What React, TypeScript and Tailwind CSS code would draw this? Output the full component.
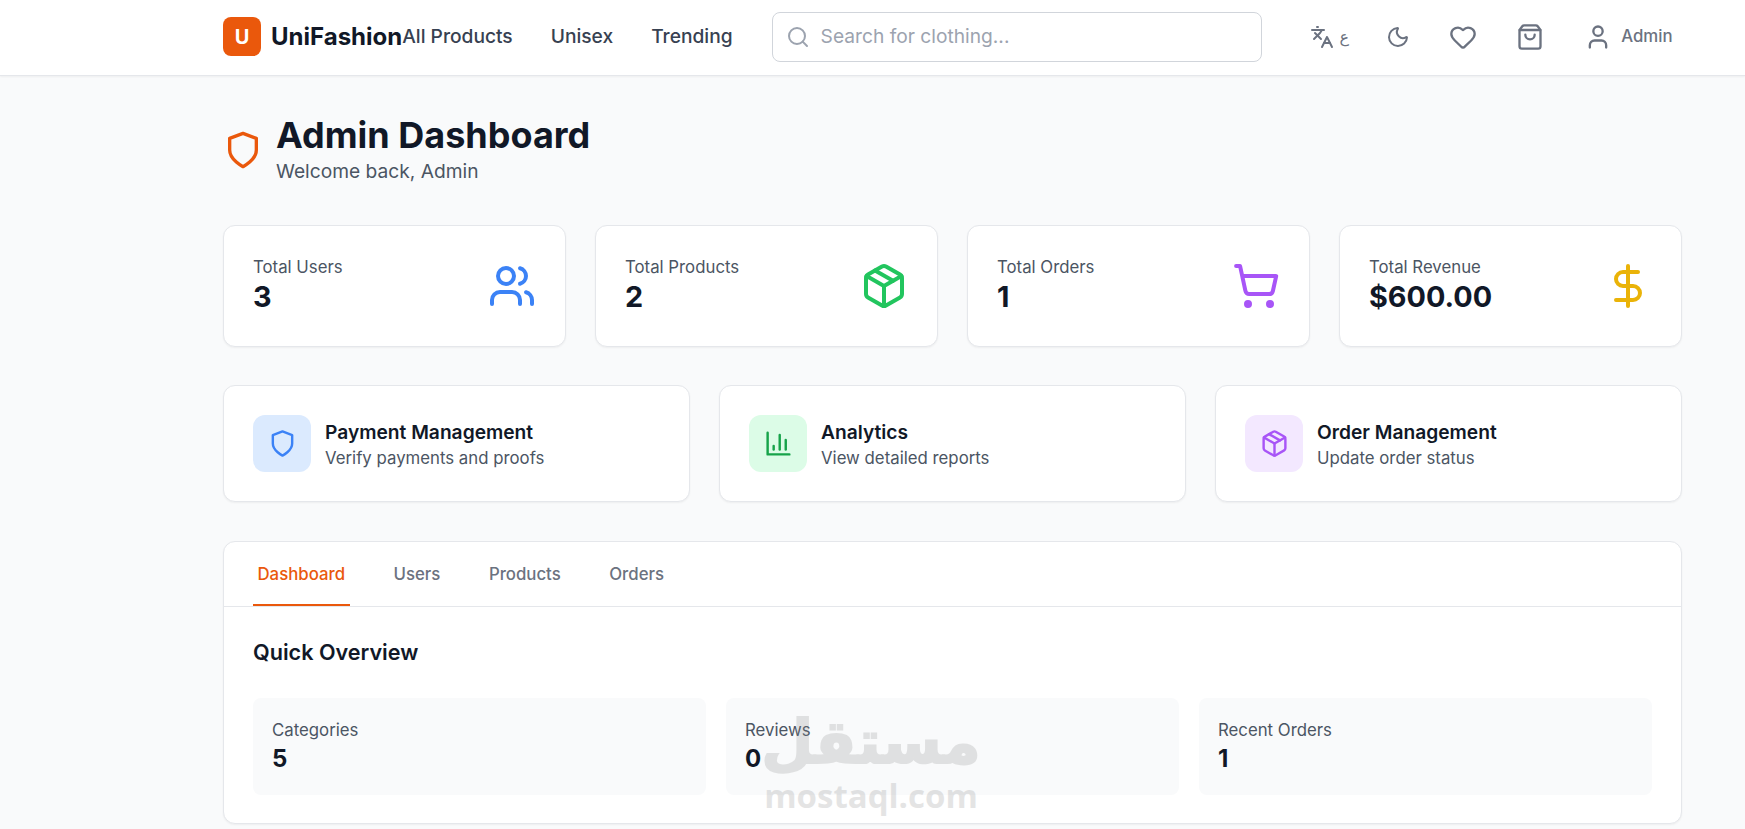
import { Heart, Moon, Package, Search, ShoppingBag, ShoppingCart, User, Users, DollarSign, Languages } from "lucide-react";

function ShieldIcon({ className }: { className?: string }) {
  return (
    <svg viewBox="0 0 24 24" fill="none" stroke="currentColor" strokeWidth="2" strokeLinecap="round" strokeLinejoin="round" className={className}>
      <path d="M12 22s8-4 8-10V5l-8-3-8 3v7c0 6 8 10 8 10z" />
    </svg>
  );
}

function BarsIcon({ className }: { className?: string }) {
  return (
    <svg viewBox="0 0 24 24" fill="none" stroke="currentColor" strokeWidth="2" strokeLinecap="round" strokeLinejoin="round" className={className}>
      <path d="M3 3v18h18" />
      <path d="M18 17V9" />
      <path d="M13 17V5" />
      <path d="M8 17v-3" />
    </svg>
  );
}

const stats = [
  { label: "Total Users", value: "3", icon: <Users className="h-12 w-12 text-[#3b82f6]" /> },
  { label: "Total Products", value: "2", icon: <Package className="h-12 w-12 text-[#22c55e]" /> },
  { label: "Total Orders", value: "1", icon: <ShoppingCart className="h-12 w-12 text-[#a855f7]" /> },
  { label: "Total Revenue", value: "$600.00", icon: <DollarSign className="h-12 w-12 text-[#eab308]" /> },
];

const actions = [
  { title: "Payment Management", text: "Verify payments and proofs", box: "bg-[#dbeafe]", icon: <ShieldIcon className="h-[29px] w-[29px] text-[#3b82f6]" /> },
  { title: "Analytics", text: "View detailed reports", box: "bg-[#dcfce7]", icon: <BarsIcon className="h-[29px] w-[29px] text-[#16a34a]" /> },
  { title: "Order Management", text: "Update order status", box: "bg-[#f3e8ff]", icon: <Package className="h-[29px] w-[29px] text-[#a855f7]" /> },
];

const overview = [
  { label: "Categories", value: "5" },
  { label: "Reviews", value: "0" },
  { label: "Recent Orders", value: "1" },
];

const tabs = ["Users", "Products", "Orders"];

export default function App() {
  return (
    <div className="relative h-[829px] overflow-hidden bg-[#f9fafb] font-['Inter',sans-serif]">
      <header className="h-[76px] border-b border-[#e5e7eb] bg-white shadow-[0_1px_2px_0_rgba(0,0,0,0.05)]">
        <div className="ml-[223px] flex h-[73px] w-[1459px] items-center">
          <div className="flex h-[39px] w-[38px] items-center justify-center rounded-lg bg-[#ea580c] text-xl font-bold text-white">U</div>
          <span className="ml-[10px] text-2xl font-bold text-[#111827]">UniFashion</span>
          <nav className="flex items-center gap-[38px] text-[19.2px] font-medium text-[#374151]">
            <a>All Products</a>
            <a>Unisex</a>
            <a>Trending</a>
          </nav>
          <div className="ml-[39px] flex h-[50px] w-[490px] items-center rounded-lg border border-[#d1d5db] bg-white pl-[13px]">
            <Search className="h-6 w-6 text-[#9ca3af]" />
            <span className="ml-[11px] text-[19.2px] text-[#9ca3af]">Search for clothing...</span>
          </div>
          <div className="ml-[48px] flex items-center text-[#6b7280]">
            <Languages className="h-6 w-6" />
            <span className="ml-[6px] font-['DejaVu_Sans',sans-serif] text-base">ع</span>
            <Moon className="ml-[37px] h-6 w-6" />
            <Heart className="ml-[39px] h-7 w-7" />
            <ShoppingBag className="ml-[39px] h-7 w-7" />
            <User className="ml-[40px] h-7 w-7" />
            <span className="ml-[9px] text-[16.8px] font-medium">Admin</span>
          </div>
        </div>
      </header>

      <main className="ml-[223px] w-[1459px]">
        <div className="mt-[38px] flex items-center">
          <ShieldIcon className="h-10 w-10 text-[#ea580c]" />
          <div className="ml-[13px]">
            <h1 className="text-[36px] leading-10 font-bold text-[#111827] translate-y-[1px]">Admin Dashboard</h1>
            <p className="mt-[3px] text-[19.2px] leading-7 text-[#4b5563]">Welcome back, Admin</p>
          </div>
        </div>

        <div className="mt-[40px] grid grid-cols-4 gap-[29px]">
          {stats.map((s) => (
            <div key={s.label} className="flex h-[122px] items-center justify-between rounded-xl border border-[#e5e7eb] bg-white px-[29px] shadow-[0_1px_2px_0_rgba(0,0,0,0.05)]">
              <div className="pb-[2px]">
                <p className="text-[16.8px] leading-6 text-[#4b5563]">{s.label}</p>
                <p className="text-[28.8px] leading-9 font-bold text-[#111827]">{s.value}</p>
              </div>
              {s.icon}
            </div>
          ))}
        </div>

        <div className="mt-[38px] grid grid-cols-3 gap-[29px]">
          {actions.map((a) => (
            <div key={a.title} className="flex h-[117px] items-center rounded-xl border border-[#e5e7eb] bg-white px-[29px] shadow-[0_1px_2px_0_rgba(0,0,0,0.05)]">
              <div className={`flex h-[57px] w-[58px] items-center justify-center rounded-xl ${a.box}`}>{a.icon}</div>
              <div className="ml-[14px]">
                <p className="text-[19.2px] leading-7 font-semibold text-[#111827]">{a.title}</p>
                <p className="text-[16.8px] leading-6 text-[#4b5563]">{a.text}</p>
              </div>
            </div>
          ))}
        </div>

        <div className="mt-[39px] h-[283px] rounded-xl border border-[#e5e7eb] bg-white shadow-[0_1px_2px_0_rgba(0,0,0,0.05)]">
          <div className="flex h-[65px] gap-[39.5px] border-b border-[#e5e7eb] px-[29px]">
            <div className="flex items-center border-b-2 border-[#ea580c] px-[4.5px] pt-[3px] text-[16.8px] font-medium text-[#ea580c]">Dashboard</div>
            {tabs.map((t) => (
              <div key={t} className="flex items-center border-b-2 border-transparent px-[4.5px] pt-[3px] text-[16.8px] font-medium text-[#6b7280]">{t}</div>
            ))}
          </div>
          <div className="px-[29px] pt-[29px]">
            <h2 className="text-[21.6px] leading-[33px] font-semibold text-[#111827]">Quick Overview</h2>
            <div className="mt-[29px] grid grid-cols-3 gap-[20px]">
              {overview.map((o) => (
                <div key={o.label} className="h-[97px] rounded-lg bg-[#f9fafb] px-[19px] pt-[20px]">
                  <p className="text-[16.8px] leading-6 text-[#4b5563]">{o.label}</p>
                  <p className="mt-[1px] text-2xl leading-8 font-bold text-[#111827]">{o.value}</p>
                </div>
              ))}
            </div>
          </div>
        </div>
      </main>

      {/* mostaql watermark */}
      <div className="pointer-events-none absolute top-[704px] left-[764px] flex w-[214px] flex-col items-center font-bold text-[#888888] opacity-[0.22]">
        <span className="font-['DejaVu_Sans',sans-serif] text-[60px] leading-[76px] [-webkit-text-stroke:2px_#888888]">مستقل</span>
        <span className="-mt-[2px] font-['Open_Sans',sans-serif] text-[33px] leading-[36px]">mostaql.com</span>
      </div>
    </div>
  );
}
